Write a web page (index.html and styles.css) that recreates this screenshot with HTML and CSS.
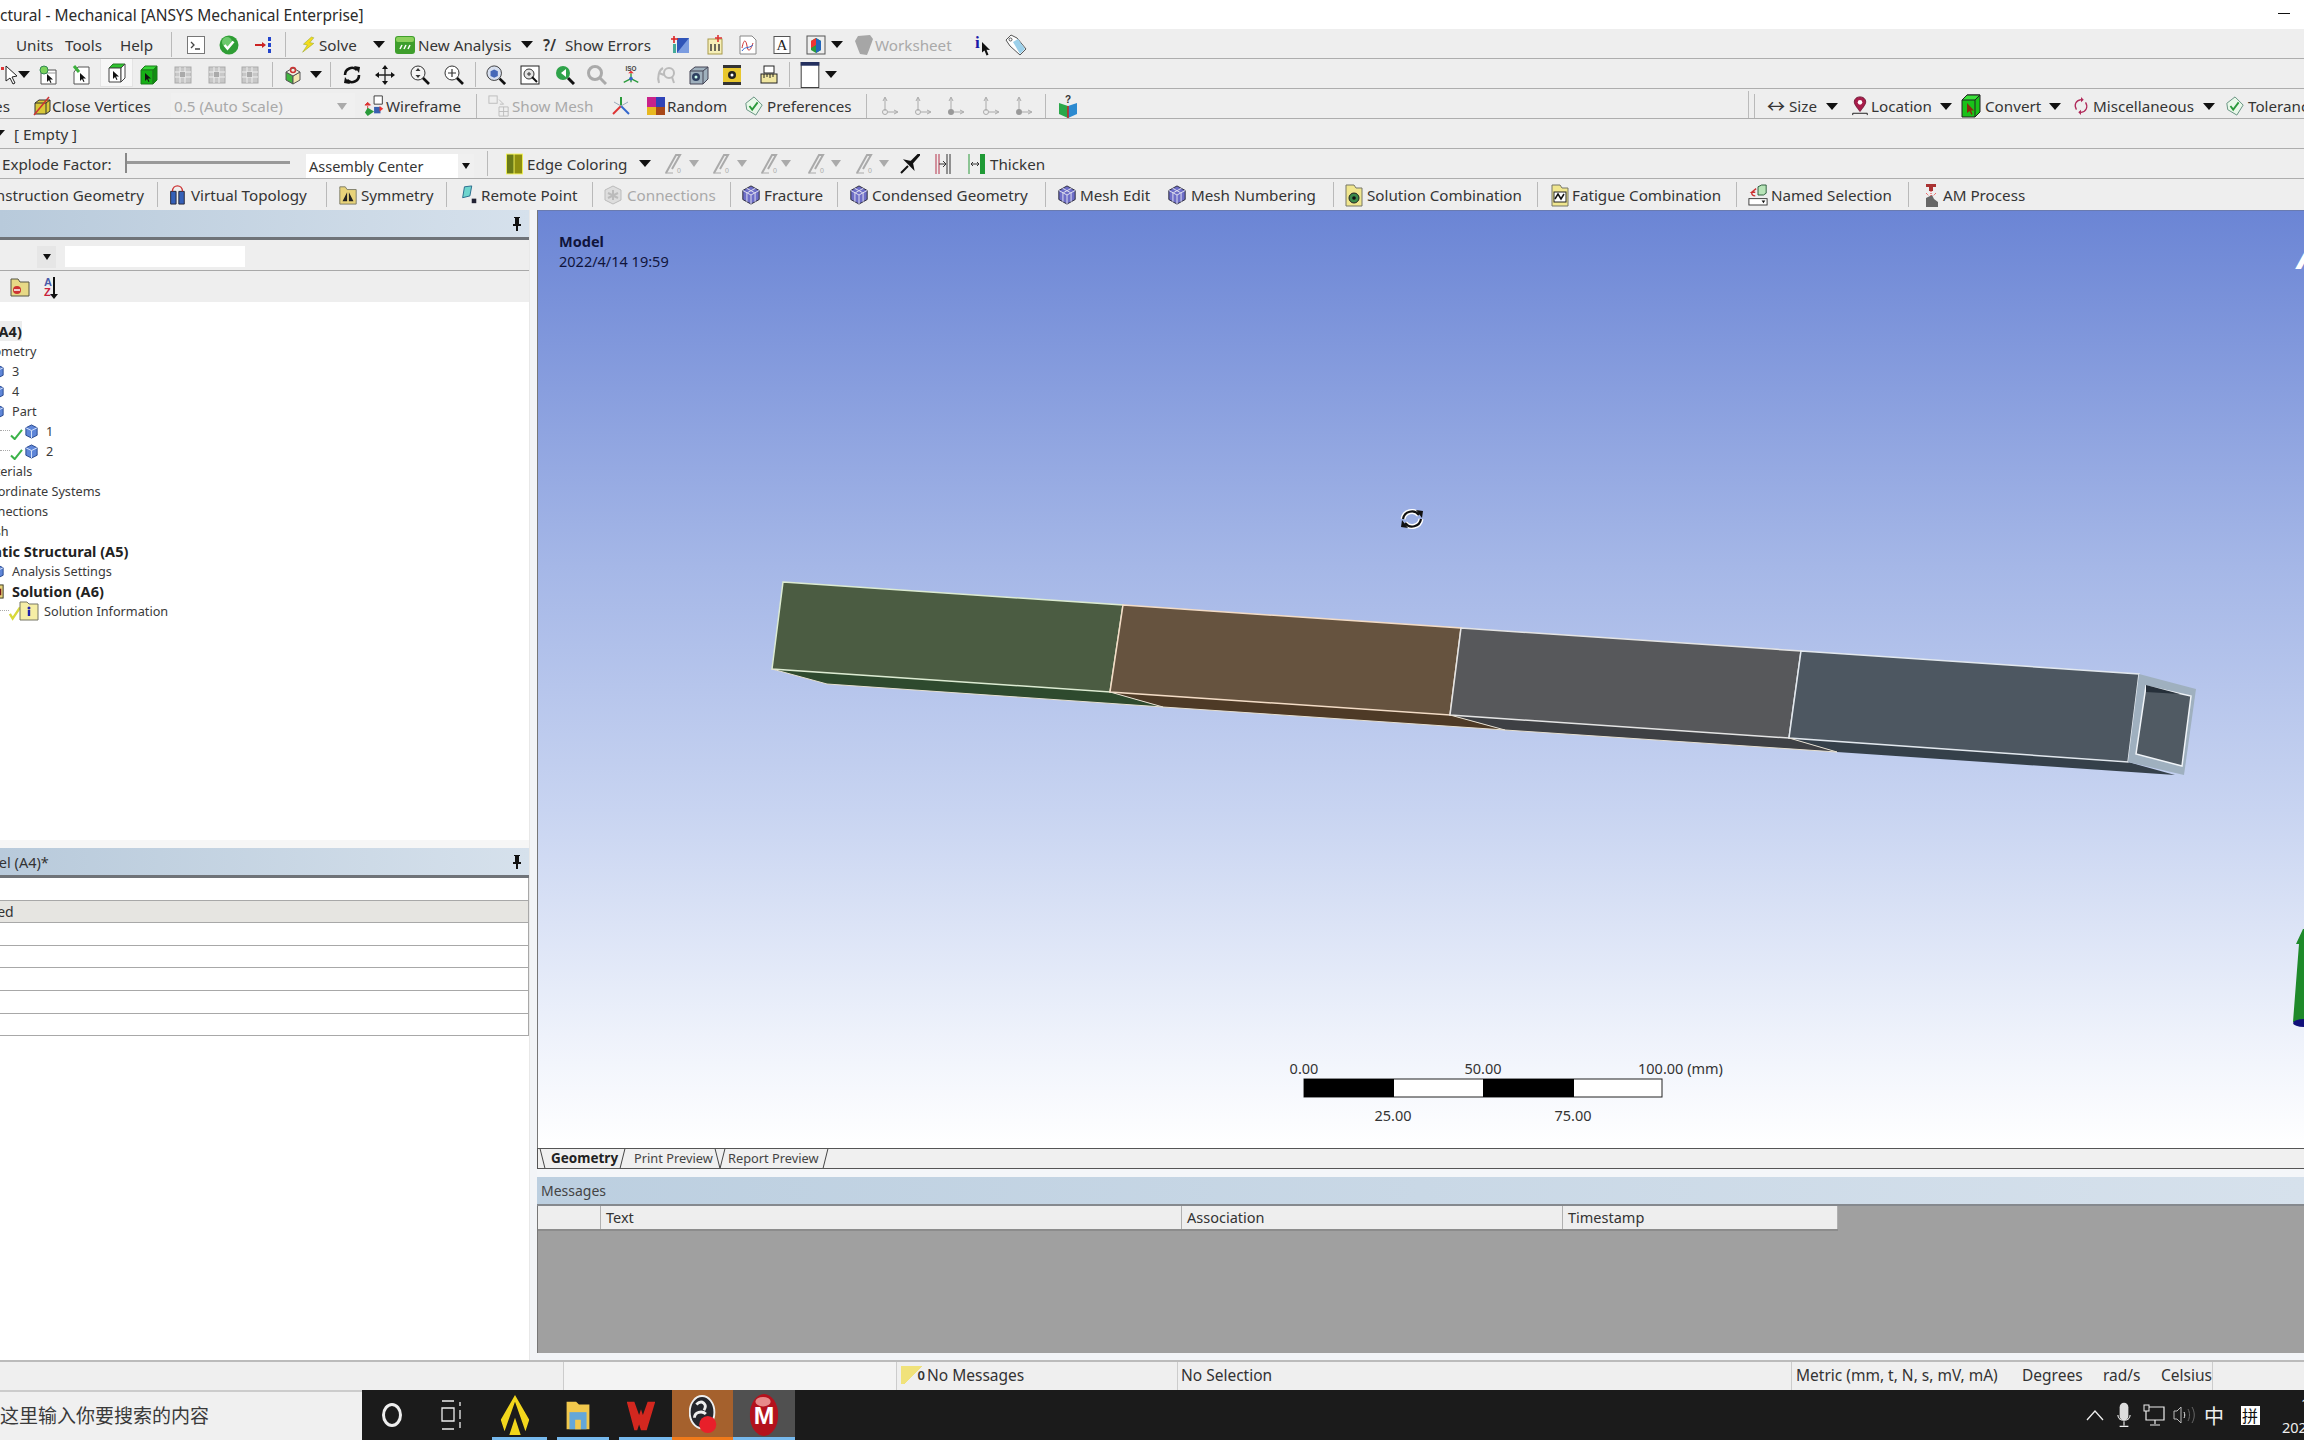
FILE: index.html
```html
<!DOCTYPE html>
<html lang="en">
<head>
<meta charset="utf-8">
<title>Static Structural - Mechanical [ANSYS Mechanical Enterprise]</title>
<link rel="stylesheet" href="styles.css">
</head>
<body>
<svg class="defs" width="0" height="0">
<symbol id="term" viewBox="0 0 20 20"><rect x="1.5" y="1.5" width="17" height="17" fill="#fff" stroke="#777"/><path d="M5 7l3 3-3 3M9 14h5" fill="none" stroke="#444" stroke-width="1.3"/></symbol>
<symbol id="okc" viewBox="0 0 20 20"><circle cx="10" cy="10" r="9.5" fill="#2f9e35"/><circle cx="8" cy="7" r="5" fill="#6cc96c"/><path d="M5.5 10l3 3.5 6-7" fill="none" stroke="#fff" stroke-width="2.6"/></symbol>
<symbol id="flow" viewBox="0 0 20 20"><path d="M1 10h9" stroke="#c22" stroke-width="2"/><path d="M8 7l4 3-4 3z" fill="#c22"/><rect x="14" y="2" width="3" height="4" fill="#24c"/><rect x="14" y="8" width="3" height="4" fill="#24c"/><rect x="14" y="14" width="3" height="4" fill="#24c"/></symbol>
<symbol id="bolt" viewBox="0 0 20 20"><path d="M13 0L3 9l5 1-6 9 14-11-5-1 5-6z" fill="#f3dc1c" stroke="#9aa92a" stroke-width=".7"/></symbol>
<symbol id="na" viewBox="0 0 20 20"><rect x="0" y="1" width="20" height="18" rx="3" fill="#3e9e2c"/><rect x="1" y="2" width="18" height="5" rx="2" fill="#8bd05c"/><path d="M5 14l2-4M9 14l2-4M13 14l2-4" stroke="#fff" stroke-width="1.5"/></symbol>
<symbol id="sheet" viewBox="0 0 20 20"><rect x="6" y="3" width="12" height="15" fill="#2f54b8"/><path d="M6 18L18 3v15z" fill="#7b9ce0"/><path d="M3 1v7M0 4h7" stroke="#d22" stroke-width="1.6"/><rect x="2" y="9" width="3" height="9" fill="#4a9"/></symbol>
<symbol id="abc" viewBox="0 0 20 20"><rect x="3" y="4" width="14" height="15" fill="#f6efb8" stroke="#a89a4a"/><path d="M6 16v-7M10 16v-7M14 16v-7" stroke="#333" stroke-width="1.4"/><path d="M13 0v7M10 3h7" stroke="#d33" stroke-width="1.6"/></symbol>
<symbol id="dgraph" viewBox="0 0 20 20"><path d="M2 1h12l4 4v14H2z" fill="#fff" stroke="#888"/><path d="M4 13c2-10 4-8 5-2s3 6 6-3" fill="none" stroke="#c33"/><path d="M4 16c3-5 6-2 11-6" fill="none" stroke="#36c"/></symbol>
<symbol id="docA" viewBox="0 0 20 20"><rect x="2" y="1.5" width="16" height="17" fill="#fff" stroke="#555"/><text x="10" y="15" text-anchor="middle" class="svg-serif">A</text></symbol>
<symbol id="cubeR" viewBox="0 0 20 20"><rect x="1" y="1" width="18" height="18" fill="#eee" stroke="#555"/><path d="M5 6l5-3 5 3v9l-5 3-5-3z" fill="#2a9a3a"/><path d="M10 3l5 3v9l-5 3z" fill="#26b"/><path d="M5 6l5-3v7l-5 3z" fill="#e33"/></symbol>
<symbol id="hand" viewBox="0 0 20 20"><path d="M2 6l3-5 12-1 3 4-4 11-2 5-7-1-2-5z" fill="#a6a6a6"/></symbol>
<symbol id="info" viewBox="0 0 24 20"><text x="2" y="13" class="svg-info">i</text><path d="M9 7l8 8-3.500-.3 2 5-2 .7-2-5-2.500 2z" fill="#111"/></symbol>
<symbol id="tag" viewBox="0 0 22 22"><path d="M1 6l5-5 6 3 9 11-6 6-10-9z" fill="#fff" stroke="#555"/><path d="M8 8l5-3 7 10-5 5z" fill="#9cd0ea"/><circle cx="5.500" cy="5.500" r="1.500" fill="#fff" stroke="#555"/></symbol>
<symbol id="cursor" viewBox="0 0 20 20"><path d="M6 1v15l4-3 3 6 2-1-3-6 5-1z" fill="#fff" stroke="#222"/><path d="M1 2h3v3H1z" fill="#d33"/></symbol>
<symbol id="selV" viewBox="0 0 20 20"><path d="M3 8l4-3h11v14H3z" fill="#fff" stroke="#555"/><path d="M7 5v3M3 8h15" stroke="#999"/><circle cx="6" cy="5" r="4" fill="#7cd25c" stroke="#385"/><path d="M9 9v8l2-2 1.500 3 1-.5-1.500-3h3z" fill="#111"/></symbol>
<symbol id="selE" viewBox="0 0 20 20"><path d="M3 7l4-5h11v17H3z" fill="#fff" stroke="#555"/><path d="M3 1l5 6" stroke="#3cb03c" stroke-width="3"/><path d="M9 8v8l2-2 1.500 3 1-.5-1.500-3h3z" fill="#111"/></symbol>
<symbol id="selF" viewBox="0 0 20 20"><path d="M2 5l4-4h12l-4 4z" fill="#2fc42f" stroke="#2a7a2a"/><path d="M2 5h12v14H2z" fill="#fff" stroke="#444"/><path d="M14 5l4-4v14l-4 4z" fill="#fff" stroke="#444"/><path d="M6 8v8l2-2 1.500 3 1-.5-1.500-3h3z" fill="#111"/></symbol>
<symbol id="selB" viewBox="0 0 20 20"><path d="M2 5l4-4h12l-4 4z" fill="#35d635" stroke="#1c7a1c"/><path d="M2 5h12v14H2z" fill="#16b016" stroke="#1c7a1c"/><path d="M14 5l4-4v14l-4 4z" fill="#0f8f0f" stroke="#1c7a1c"/><path d="M6 8v8l2-2 1.500 3 1-.5-1.500-3h3z" fill="#111"/></symbol>
<symbol id="gmesh" viewBox="0 0 20 20"><rect x="2" y="2" width="16" height="16" fill="#c8c8c8" stroke="#aaa"/><path d="M2 7h16M2 12h16M7 2v16M12 2v16" stroke="#eee"/><rect x="7" y="7" width="5" height="5" fill="#aaa"/></symbol>
<symbol id="cubeP" viewBox="0 0 20 20"><path d="M3 7l7 4v8l-7-4z" fill="#3fb53f" stroke="#555"/><path d="M17 7l-7 4v8l7-4z" fill="#f4e7b2" stroke="#555"/><path d="M3 7l7-4 7 4-7 4z" fill="#f1efe0" stroke="#555"/><circle cx="10" cy="5" r="2.500" fill="none" stroke="#c33" stroke-width="1.500"/></symbol>
<symbol id="rot" viewBox="0 0 20 20"><path d="M3 10a7 7 0 0 1 12-5" fill="none" stroke="#111" stroke-width="2.600"/><path d="M12 1l6 1-1 6z" fill="#111"/><path d="M17 10a7 7 0 0 1-12 5" fill="none" stroke="#111" stroke-width="2.600"/><path d="M8 19l-6-1 1-6z" fill="#111"/></symbol>
<symbol id="pan" viewBox="0 0 20 20"><path d="M10 3v14M3 10h14" stroke="#222" stroke-width="1.300"/><path d="M10 0l3 4H7zM10 20l3-4H7zM0 10l4-3v6zM20 10l-4-3v6z" fill="#111"/></symbol>
<symbol id="zb" viewBox="0 0 20 20"><circle cx="8" cy="8" r="7" fill="#f4f4f4" stroke="#333"/><path d="M8 3l2.500 3h-5zM8 13l2.500-3h-5z" fill="#333"/><path d="M13 13l6 6" stroke="#111" stroke-width="2.600"/></symbol>
<symbol id="zp" viewBox="0 0 20 20"><circle cx="8" cy="8" r="7" fill="#fff" stroke="#333"/><path d="M8 4v8M4 8h8" stroke="#333" stroke-width="1.200"/><path d="M13 13l6 6" stroke="#111" stroke-width="2.600"/></symbol>
<symbol id="zcube" viewBox="0 0 22 22"><circle cx="9" cy="9" r="8" fill="#d7dfef" stroke="#333"/><path d="M5 7l4-2 4 2v5l-4 2-4-2z" fill="#4668b8"/><path d="M15 15l6 6" stroke="#111" stroke-width="3"/></symbol>
<symbol id="zbox" viewBox="0 0 20 20"><rect x="1" y="1" width="18" height="18" fill="#fff" stroke="#222"/><circle cx="9" cy="9" r="5" fill="#e4e4e4" stroke="#333"/><path d="M7 9h4M9 7v4" stroke="#333"/><path d="M12 12l5 5" stroke="#111" stroke-width="2"/></symbol>
<symbol id="zgreen" viewBox="0 0 20 20"><circle cx="8" cy="8" r="7" fill="#2fa34a"/><path d="M11 4L6 8l5 4z" fill="#fff"/><path d="M13 13l6 6" stroke="#111" stroke-width="3"/></symbol>
<symbol id="zgrey" viewBox="0 0 20 20"><circle cx="8" cy="8" r="6.500" fill="none" stroke="#aaa" stroke-width="3"/><path d="M13 13l6 6" stroke="#aaa" stroke-width="3"/></symbol>
<symbol id="iso" viewBox="0 0 22 22"><text x="11" y="7" text-anchor="middle" class="svg-iso">ISO</text><path d="M11 9v10M11 15l-8 4M11 15l8 4" stroke="#2a9a3a" stroke-width="1.500"/><path d="M8 9h6l-3-3z" fill="#e33"/><circle cx="11" cy="15" r="2" fill="#36c"/></symbol>
<symbol id="look" viewBox="0 0 20 20"><path d="M3 18c-2-6 0-13 4-15M3 8l5 2" fill="none" stroke="#bbb" stroke-width="2"/><circle cx="13" cy="8" r="5" fill="none" stroke="#bbb" stroke-width="2"/><path d="M16 12l2 6" stroke="#bbb" stroke-width="2"/></symbol>
<symbol id="eye" viewBox="0 0 20 20"><path d="M1 6l5-4h13v12l-5 5H1z" fill="#9fb0bd" stroke="#445"/><path d="M1 6h13v13M14 6l5-4" fill="none" stroke="#445"/><circle cx="7" cy="12" r="4" fill="#2d3f60"/><circle cx="7" cy="12" r="1.500" fill="#cfe"/></symbol>
<symbol id="film" viewBox="0 0 20 20"><rect x="1" y="0" width="18" height="20" fill="#e8c72e"/><rect x="1" y="0" width="18" height="3" fill="#333"/><rect x="1" y="17" width="18" height="3" fill="#333"/><circle cx="10" cy="10" r="4" fill="#222"/><circle cx="10" cy="10" r="1.500" fill="#fff"/></symbol>
<symbol id="ruler" viewBox="0 0 20 20"><rect x="5" y="1" width="10" height="7" fill="#fff" stroke="#222"/><rect x="2" y="9" width="16" height="9" fill="#f0e6a0" stroke="#222"/><path d="M5 9v4M8 9v3M11 9v4M14 9v3" stroke="#222"/></symbol>
<symbol id="win" viewBox="0 0 20 28"><rect x=".5" y=".5" width="19" height="27" fill="#fff" stroke="#333"/><rect x="0" y="0" width="20" height="4" fill="#24305f"/></symbol>
<symbol id="closeV" viewBox="0 0 20 20"><path d="M3 7l4-3h11v11l-4 3H3z" fill="#d8c838" stroke="#333"/><path d="M3 7h11v11M14 7l4-3" fill="none" stroke="#333"/><path d="M2 19L17 1" stroke="#c33" stroke-width="1.500"/></symbol>
<symbol id="wire" viewBox="0 0 22 24"><path d="M10 1h9v9h-9z" fill="#fff" stroke="#333"/><path d="M3 8l3 3H0zM3 12v4" stroke="#d33" fill="#d33"/><path d="M3 14l7 4-7 5-3-4z" fill="#2a9a3a"/><rect x="10" y="13" width="7" height="7" fill="#3860b0"/><path d="M16 12l4 3-4 3z" fill="#e33"/></symbol>
<symbol id="showM" viewBox="0 0 24 24"><rect x="1" y="1" width="9" height="8" fill="none" stroke="#bbb"/><path d="M12 5l5 5h-4" fill="none" stroke="#bbb"/><path d="M12 13h10v10H12zM12 18h10M17 13v10" fill="none" stroke="#bbb"/></symbol>
<symbol id="triad" viewBox="0 0 20 20"><path d="M10 1v9" stroke="#2a9a3a" stroke-width="2"/><path d="M10 10L2 18" stroke="#d33" stroke-width="2"/><path d="M10 10l8 8" stroke="#36c" stroke-width="2"/><path d="M3 6l7 4 7-4" stroke="#9ab" fill="none"/></symbol>
<symbol id="rand" viewBox="0 0 20 20"><rect x="1" y="1" width="9" height="10" fill="#c8238a"/><rect x="10" y="1" width="9" height="10" fill="#2f43b8"/><rect x="1" y="11" width="9" height="8" fill="#e8b820"/><rect x="10" y="11" width="9" height="8" fill="#a84818"/></symbol>
<symbol id="pref" viewBox="0 0 20 22"><path d="M10 1l9 9-7 11-10-6-1-7z" fill="#e8f8e8" stroke="#5a8a78"/><path d="M5 11l3 4 6-8" fill="none" stroke="#2a9a3a" stroke-width="2"/></symbol>
<symbol id="axO" viewBox="0 0 20 20"><path d="M6 15V2M4 5l2-4 2 4M9 16h9M15 14l4 2-4 2" fill="none" stroke="#aaa"/><circle cx="6" cy="16" r="2.500" fill="none" stroke="#aaa"/></symbol>
<symbol id="axF" viewBox="0 0 20 20"><path d="M6 15V2M4 5l2-4 2 4M9 16h9M15 14l4 2-4 2" fill="none" stroke="#aaa"/><circle cx="6" cy="16" r="3" fill="#999"/></symbol>
<symbol id="book" viewBox="0 0 20 24"><text x="10" y="9" text-anchor="middle" class="svg-q">?</text><path d="M10 12L1 9v11l9 4z" fill="#2aa84a"/><path d="M10 12l9-3v11l-9 4z" fill="#2c8ad0"/><path d="M10 12v12" stroke="#c22" stroke-width="1.500"/></symbol>
<symbol id="loc" viewBox="0 0 20 22"><path d="M10 1c-5 0-7 4-6 7s6 9 6 9 5-6 6-9-1-7-6-7z" fill="#a81c4a" stroke="#6b1030"/><circle cx="10" cy="7" r="2.500" fill="#fff"/><path d="M2 21v-2h16v2" fill="none" stroke="#111"/></symbol>
<symbol id="conv" viewBox="0 0 20 24"><path d="M1 6l5-5h13v17l-5 5H1z" fill="#19c219" stroke="#222"/><path d="M1 6l5-5h13l-5 5z" fill="#3ae03a" stroke="#222"/><path d="M14 6v17M14 6l5-5" fill="none" stroke="#222"/><path d="M6 9v10l2.500-2 2 4 1-1-1.500-3.500h3z" fill="#8a2a10"/></symbol>
<symbol id="misc" viewBox="0 0 18 22"><path d="M9 4C3 5 1 10 4 15M9 18c6-1 8-6 5-11" fill="none" stroke="#b02a5a" stroke-width="1.400"/><path d="M9 1l3 3-3 3zM9 15l-3 3 3 3z" fill="#b02a5a"/></symbol>
<symbol id="pen" viewBox="0 0 20 20"><path d="M3 19L13 1h4l-8 14" fill="none" stroke="#aaa" stroke-width="2"/><path d="M2 19h8" stroke="#aaa"/><text x="14" y="19" class="svg-sm">0</text></symbol>
<symbol id="pin" viewBox="0 0 20 20"><path d="M19 0L11 8l-5-1 7 7-1-5 7-8zM8 12l-7 7" fill="#111" stroke="#111" stroke-width="2"/></symbol>
<symbol id="bars" viewBox="0 0 18 20"><path d="M2 0v20M5 0v20" stroke="#b5334a"/><path d="M5 10h7M9 7l3 3-3 3" fill="none" stroke="#333"/><path d="M13 0v20M16 0v20" stroke="#333"/></symbol>
<symbol id="thk" viewBox="0 0 18 20"><path d="M1 0v20" stroke="#2a9a3a"/><path d="M3 10h8M5 8l-2 2 2 2M9 8l2 2-2 2" fill="none" stroke="#333"/><rect x="12" y="0" width="5" height="20" fill="#1f9a35"/></symbol>
<symbol id="edge" viewBox="0 0 18 22"><rect width="18" height="22" fill="#f2f25a"/><rect x="1" y="1" width="7" height="20" fill="#6a7a18"/><rect x="9" y="1" width="8" height="20" fill="#8f8f10"/></symbol>
<symbol id="vt" viewBox="0 0 22 24"><path d="M4 8h6v14H4zM13 8h6v14h-6z" fill="#3460b8" stroke="#223"/><path d="M6 8c0-8 11-8 11 0" fill="none" stroke="#c33" stroke-width="1.500"/></symbol>
<symbol id="sym" viewBox="0 0 20 22"><path d="M1 5V2h6l2 3h10v16H1z" fill="#e8d37a" stroke="#776"/><path d="M9 8v10L4 18zM11 8v10l5 0z" fill="#222"/></symbol>
<symbol id="rp" viewBox="0 0 20 22"><path d="M3 14L5 2l8-1-2 11z" fill="#6ed5ce" stroke="#268"/><rect x="13" y="15" width="5" height="5" fill="#223"/></symbol>
<symbol id="conn" viewBox="0 0 20 20"><path d="M10 1l8 4v10l-8 4-8-4V5z" fill="#ddd" stroke="#bbb"/><path d="M10 5v10M5 8l10 5M15 8L5 13" stroke="#bbb" stroke-width="2"/></symbol>
<symbol id="hex" viewBox="0 0 22 22"><path d="M11 1l9 5v10l-9 5-9-5V6z" fill="#6e6ec8" stroke="#223"/><path d="M2 6l9 5 9-5M11 11v10M6 3.500l9 5M16 3.500l-9 5M6.500 8.500v10M15.500 8.500v10" fill="none" stroke="#dde" stroke-width="1.100"/></symbol>
<symbol id="fold" viewBox="0 0 20 24"><path d="M2 6V2h8l2 3h6v18H2z" fill="#f0e68e" stroke="#776"/><circle cx="10" cy="15" r="5" fill="#3a8a4a" stroke="#222"/><circle cx="10" cy="15" r="1.800" fill="#111"/></symbol>
<symbol id="foldF" viewBox="0 0 20 24"><path d="M2 6V2h8l2 3h6v18H2z" fill="#f0e68e" stroke="#776"/><rect x="4" y="9" width="12" height="10" fill="#fff" stroke="#222"/><path d="M5 16l3-5 3 5 3-5" fill="none" stroke="#111" stroke-width="1.500"/></symbol>
<symbol id="ns" viewBox="0 0 22 24"><path d="M9 5l-5 4h4M4 9c0 3 2 4 4 4" fill="none" stroke="#c33" stroke-width="1.500"/><path d="M11 3l4-2h5v9l-3 2h-6z" fill="#b7e4b7" stroke="#253"/><rect x="1" y="16" width="20" height="7" fill="#fff" stroke="#333"/><path d="M15 18h4l-2 3z" fill="#111"/></symbol>
<symbol id="am" viewBox="0 0 20 24"><path d="M5 1h10v3h-3v4H8V4H5z" fill="#a33"/><path d="M5 24v-9l6-3 2 4 4 3v5z" fill="#666"/><path d="M10 8v5M5 10l3 3M15 10l-3 3" stroke="#e33" stroke-dasharray="1 1"/></symbol>
<symbol id="cube" viewBox="0 0 16 16"><path d="M8 1l6 3v8l-6 3-6-3V4z" fill="#5f86d8" stroke="#24458c"/><path d="M2 4l6 3 6-3M8 7v8" fill="none" stroke="#dbe7fb"/></symbol>
<symbol id="tick" viewBox="0 0 14 12"><path d="M1 7l4 4 8-10" fill="none" stroke="#3cb34a" stroke-width="2.200"/></symbol>
<symbol id="tickY" viewBox="0 0 14 16"><path d="M2 9l3 5 8-12" fill="none" stroke="#d8d83a" stroke-width="2.600"/></symbol>
<symbol id="infoF" viewBox="0 0 20 20"><path d="M1 4V1h7l2 2h9v16H1z" fill="#f6eea5" stroke="#776"/><circle cx="10" cy="7" r="1.500" fill="#22a"/><path d="M10 9v6" stroke="#22a" stroke-width="2.400"/></symbol>
<symbol id="folderN" viewBox="0 0 20 20"><path d="M1 19V2h7l2 3h9v14z" fill="#e7d986" stroke="#554"/><circle cx="7" cy="13" r="4" fill="#c33"/><path d="M4 13h6" stroke="#fff" stroke-width="1.500"/></symbol>
<symbol id="solF" viewBox="0 0 14 16"><rect x="1" y="1" width="12" height="14" fill="#e8d37a" stroke="#332"/><rect x="4" y="5" width="7" height="7" fill="#7a1a1a"/></symbol>
<symbol id="pushpin" viewBox="0 0 12 14"><path d="M3 0h6v1H8v6h2v2H7v5H5V9H2V7h2V1H3z" fill="#111"/></symbol>
<symbol id="aIcon" viewBox="0 0 30 46"><path d="M15 2L0 28 4 40 15 9 26 40l4-12zM9 44l6-18 6 18z" fill="#f2d61c"/></symbol>
<symbol id="folderT" viewBox="0 0 28 34"><path d="M2 3h10l3 3h11v26H2z" fill="#f1c84c"/><rect x="5" y="14" width="18" height="18" fill="#64a7d8"/><rect x="11" y="22" width="6" height="10" fill="#f1c84c"/></symbol>
<symbol id="wps" viewBox="0 0 30 32"><path d="M0 2h8l5 14 2-6 2 6 5-14h8l-9 30h-6l-2-6-2 6H8z" fill="#d3271f"/></symbol>
<symbol id="obs" viewBox="0 0 30 42"><ellipse cx="14" cy="18" rx="13" ry="17" fill="#25262c" stroke="#eee" stroke-width="2"/><path d="M8 10c6-6 12 0 8 6M6 24c0-6 8-8 12-4" fill="none" stroke="#eee" stroke-width="3"/><circle cx="20" cy="31" r="9" fill="#e8202a"/></symbol>
<symbol id="mega" viewBox="0 0 30 46"><ellipse cx="15" cy="23" rx="15" ry="22" fill="#b3121d"/><ellipse cx="14" cy="9" rx="8" ry="5" fill="#e78a8a"/><text x="15" y="33" text-anchor="middle" class="svg-mega">M</text></symbol>
<symbol id="taskv" viewBox="0 0 22 30"><path d="M1 1h12M1 8h12v13H1zM1 29h12M19 2v4M19 10v9M19 22v6" fill="none" stroke="#eee" stroke-width="1.300"/></symbol>
<symbol id="mic" viewBox="0 0 16 28"><rect x="3" y="0" width="10" height="20" rx="5" fill="#ddd"/><path d="M1 14c0 8 14 8 14 0M8 21v5M3 27h10" fill="none" stroke="#eee" stroke-width="1.300"/></symbol>
<symbol id="net" viewBox="0 0 22 22"><path d="M5 3h16v13H3V7M12 16v4M7 21h10" fill="none" stroke="#eee" stroke-width="1.200"/><rect x="1" y="1" width="5" height="6" fill="#222" stroke="#eee"/></symbol>
<symbol id="vol" viewBox="0 0 22 22"><path d="M1 7h3l4-4v16l-4-4H1z" fill="none" stroke="#bbb"/><path d="M11 8c1 2 1 4 0 6" fill="none" stroke="#eee"/><path d="M15 5c2 4 2 8 0 12M19 3c3 5 3 11 0 16" fill="none" stroke="#666"/></symbol>
<symbol id="up" viewBox="0 0 18 12"><path d="M1 11l8-9 8 9" fill="none" stroke="#eee" stroke-width="1.300"/></symbol>
</svg>

<div class="app">
  <header class="titlebar">
    <span class="title">ctural - Mechanical [ANSYS Mechanical Enterprise]</span>
    <span class="min"></span>
  </header>

  <div class="tb tb1">
    <span class="lb">Units</span><span class="lb">Tools</span><span class="lb">Help</span><i class="sep"></i>
    <svg class="ic"><use href="#term"/></svg><svg class="ic"><use href="#okc"/></svg><svg class="ic"><use href="#flow"/></svg><i class="sep"></i>
    <svg class="ic n"><use href="#bolt"/></svg><span class="lb">Solve</span><i class="ar"></i>
    <svg class="ic"><use href="#na"/></svg><span class="lb">New Analysis</span><i class="ar"></i>
    <span class="lb q">?/</span><span class="lb">Show Errors</span>
    <svg class="ic"><use href="#sheet"/></svg><svg class="ic"><use href="#abc"/></svg><svg class="ic"><use href="#dgraph"/></svg><svg class="ic"><use href="#docA"/></svg><svg class="ic"><use href="#cubeR"/></svg><i class="ar"></i>
    <svg class="ic"><use href="#hand"/></svg><span class="lb off">Worksheet</span>
    <svg class="ic w"><use href="#info"/></svg><svg class="ic w"><use href="#tag"/></svg>
  </div>

  <div class="tb tb2">
    <svg class="ic"><use href="#cursor"/></svg><i class="ar"></i>
    <svg class="ic"><use href="#selV"/></svg><svg class="ic"><use href="#selE"/></svg><span class="on"><svg class="ic"><use href="#selF"/></svg></span><svg class="ic"><use href="#selB"/></svg>
    <svg class="ic"><use href="#gmesh"/></svg><svg class="ic"><use href="#gmesh"/></svg><svg class="ic"><use href="#gmesh"/></svg><i class="sep"></i>
    <svg class="ic"><use href="#cubeP"/></svg><i class="ar"></i><i class="sep"></i>
    <svg class="ic"><use href="#rot"/></svg><svg class="ic"><use href="#pan"/></svg><svg class="ic"><use href="#zb"/></svg><svg class="ic"><use href="#zp"/></svg><i class="sep"></i>
    <svg class="ic"><use href="#zcube"/></svg><svg class="ic"><use href="#zbox"/></svg><svg class="ic"><use href="#zgreen"/></svg><svg class="ic"><use href="#zgrey"/></svg><svg class="ic"><use href="#iso"/></svg><svg class="ic"><use href="#look"/></svg><svg class="ic"><use href="#eye"/></svg><svg class="ic"><use href="#film"/></svg><svg class="ic"><use href="#ruler"/></svg><i class="sep"></i>
    <svg class="ic tall"><use href="#win"/></svg><i class="ar"></i>
  </div>

  <div class="tb tb3">
    <span class="lb cut-es">Edges</span><svg class="ic"><use href="#closeV"/></svg><span class="lb">Close Vertices</span>
    <div class="combo"><span class="lb off">0.5 (Auto Scale)</span><i class="ar g"></i></div>
    <svg class="ic w"><use href="#wire"/></svg><span class="lb">Wireframe</span><i class="sep"></i>
    <svg class="ic w"><use href="#showM"/></svg><span class="lb off">Show Mesh</span><svg class="ic"><use href="#triad"/></svg>
    <svg class="ic"><use href="#rand"/></svg><span class="lb">Random</span><svg class="ic"><use href="#pref"/></svg><span class="lb">Preferences</span><i class="sep"></i>
    <svg class="ic"><use href="#axO"/></svg><svg class="ic"><use href="#axO"/></svg><svg class="ic"><use href="#axF"/></svg><svg class="ic"><use href="#axO"/></svg><svg class="ic"><use href="#axF"/></svg><i class="sep"></i>
    <svg class="ic tall2"><use href="#book"/></svg>
    <i class="wall"></i><i class="sep"></i>
    <span class="lb dbl">↔</span><span class="lb">Size</span><i class="ar"></i>
    <svg class="ic"><use href="#loc"/></svg><span class="lb">Location</span><i class="ar"></i>
    <svg class="ic tall2"><use href="#conv"/></svg><span class="lb">Convert</span><i class="ar"></i>
    <svg class="ic"><use href="#misc"/></svg><span class="lb">Miscellaneous</span><i class="ar"></i>
    <svg class="ic"><use href="#pref"/></svg><span class="lb">Tolerances</span>
  </div>

  <div class="tb tb4">
    <i class="ar cut-ar"></i><span class="lb">[ Empty ]</span>
  </div>

  <div class="tb tb5">
    <span class="lb">Explode Factor:</span>
    <div class="slider"><i class="thumb"></i></div>
    <div class="combo2"><span class="lb">Assembly Center</span><span class="combo2-btn"><i class="ar"></i></span></div>
    <i class="sep"></i>
    <svg class="ic e"><use href="#edge"/></svg><span class="lb">Edge Coloring</span><i class="ar"></i>
    <svg class="ic"><use href="#pen"/></svg><i class="ar g"></i><svg class="ic"><use href="#pen"/></svg><i class="ar g"></i><svg class="ic"><use href="#pen"/></svg><i class="ar g"></i><svg class="ic"><use href="#pen"/></svg><i class="ar g"></i><svg class="ic"><use href="#pen"/></svg><i class="ar g"></i>
    <svg class="ic"><use href="#pin"/></svg><svg class="ic"><use href="#bars"/></svg><svg class="ic"><use href="#thk"/></svg><span class="lb">Thicken</span>
  </div>

  <div class="tb tb6">
    <span class="lb cut-con">Construction Geometry</span><i class="sep"></i>
    <svg class="ic tall2"><use href="#vt"/></svg><span class="lb">Virtual Topology</span><i class="sep"></i>
    <svg class="ic"><use href="#sym"/></svg><span class="lb">Symmetry</span><i class="sep"></i>
    <svg class="ic"><use href="#rp"/></svg><span class="lb">Remote Point</span><i class="sep"></i>
    <svg class="ic"><use href="#conn"/></svg><span class="lb off">Connections</span><i class="sep"></i>
    <svg class="ic"><use href="#hex"/></svg><span class="lb">Fracture</span><i class="sep"></i>
    <svg class="ic"><use href="#hex"/></svg><span class="lb">Condensed Geometry</span><i class="sep"></i>
    <svg class="ic"><use href="#hex"/></svg><span class="lb">Mesh Edit</span>
    <svg class="ic"><use href="#hex"/></svg><span class="lb">Mesh Numbering</span><i class="sep"></i>
    <svg class="ic tall2"><use href="#fold"/></svg><span class="lb">Solution Combination</span><i class="sep"></i>
    <svg class="ic tall2"><use href="#foldF"/></svg><span class="lb">Fatigue Combination</span><i class="sep"></i>
    <svg class="ic tall2"><use href="#ns"/></svg><span class="lb">Named Selection</span><i class="sep"></i>
    <svg class="ic tall2"><use href="#am"/></svg><span class="lb">AM Process</span>
  </div>

  <main class="main">
    <aside class="left">
      <div class="phead"><span></span><svg class="pinned"><use href="#pushpin"/></svg></div>
      <div class="filter"><span class="filter-btn"><i class="ar"></i></span><span class="filter-input"></span></div>
      <div class="treebar"><svg class="ic"><use href="#folderN"/></svg><span class="az">A<br><span class="az-z">Z</span></span><i class="azarrow"></i></div>
      <div class="tree">
        <div class="row b l1"><span class="hl">Model (A4)</span></div>
        <div class="row l2">Geometry</div>
        <div class="row"><svg class="tcube cut"><use href="#cube"/></svg><span>3</span></div>
        <div class="row"><svg class="tcube cut"><use href="#cube"/></svg><span>4</span></div>
        <div class="row"><svg class="tcube cut"><use href="#cube"/></svg><span>Part</span></div>
        <div class="row lp"><i class="dots"></i><svg class="ttick"><use href="#tick"/></svg><svg class="tcube"><use href="#cube"/></svg><span>1</span></div>
        <div class="row lp"><i class="dots"></i><svg class="ttick"><use href="#tick"/></svg><svg class="tcube"><use href="#cube"/></svg><span>2</span></div>
        <div class="row l2">Materials</div>
        <div class="row l2b">Coordinate Systems</div>
        <div class="row l2c">Connections</div>
        <div class="row l2d">Mesh</div>
        <div class="row b l2s">Static Structural (A5)</div>
        <div class="row"><svg class="tcube cut"><use href="#cube"/></svg><span>Analysis Settings</span></div>
        <div class="row b"><svg class="tcube cut"><use href="#solF"/></svg><span>Solution (A6)</span></div>
        <div class="row lp2"><i class="dots"></i><svg class="ttickY"><use href="#tickY"/></svg><svg class="tinfo"><use href="#infoF"/></svg><span>Solution Information</span></div>
      </div>
      <div class="phead det"><span class="cut-d">Model (A4)*</span><svg class="pinned"><use href="#pushpin"/></svg></div>
      <div class="dtable">
        <div class="dr"></div>
        <div class="dr gr"><span class="cut-ed">Defined</span></div>
        <div class="dr"></div>
        <div class="dr"></div>
        <div class="dr"></div>
        <div class="dr"></div>
        <div class="dr"></div>
      </div>
    </aside>

    <section class="right">
      <div class="view">
        <svg class="scene" viewBox="537 211 1767 936">
          <g stroke-width="1.500">
            <polygon points="772,670 827,685 1163,708 1110,693" fill="#2e4a2e"/>
            <polygon points="1110,693 1163,708 1505,731 1450,716" fill="#4e3a26"/>
            <polygon points="1450,716 1505,731 1837,753 1789,739" fill="#3e4044"/>
            <polygon points="1789,739 1837,753 2175,776 2128,763" fill="#35404a"/>
            <polygon points="783,583 1123,606 1110,693 772,670" fill="#4b5c42" stroke="#dcebd2"/>
            <polygon points="1123,606 1461,629 1450,716 1110,693" fill="#66533f" stroke="#f3dcc6"/>
            <polygon points="1461,629 1801,652 1789,739 1450,716" fill="#57585b" stroke="#e4e4e4"/>
            <polygon points="1801,652 2139,675 2128,763 1789,739" fill="#4d5761" stroke="#e2e8ee"/>
            <path d="M772 670l55 15 336 23M1110 693l53 15M1163 708l342 23M1450 716l55 15M1505 731l332 22M1789 739l48 14" fill="none" stroke="#e6dfd0" stroke-width="1"/>
            <polygon points="2139,675 2196,690 2184,776 2128,763" fill="#9fb0bf"/>
            <polygon points="2146,687 2191,697 2182,767 2136,755" fill="#505a63" stroke="#f0f4f8"/>
            <polygon points="2146,686 2180,695 2146,693" fill="#26303a"/>
          </g>
          <polygon points="2293,1023 2299,945 2296,945 2303,930 2304,930 2304,1023" fill="#1e8a2a"/>
          <ellipse cx="2304" cy="1024" rx="11" ry="4" fill="#10107a"/>
          <g fill="none" stroke="#fff" stroke-width="5"><path d="M1403 520a9 9 0 0 1 16-4M1421 520a9 9 0 0 1-16 4"/></g>
          <g fill="none" stroke="#111" stroke-width="2.200"><path d="M1403 520a9 9 0 0 1 16-4M1421 520a9 9 0 0 1-16 4"/></g>
          <path d="M1416 511l7 1-1 7zM1408 529l-7-1 1-7z" fill="#111"/>
          <rect x="1304" y="1080" width="358" height="18" fill="#fff" stroke="#222"/>
          <rect x="1304" y="1080" width="90" height="18" fill="#000"/>
          <rect x="1483" y="1080" width="91" height="18" fill="#000"/>
          <text x="1304" y="1075" class="sc m">0.00</text>
          <text x="1483" y="1075" class="sc m">50.00</text>
          <text x="1638" y="1075" class="sc">100.00 (mm)</text>
          <text x="1393" y="1122" class="sc m">25.00</text>
          <text x="1573" y="1122" class="sc m">75.00</text>
        </svg>
        <div class="vlabel"><b>Model</b><br>2022/4/14 19:59</div>
        <div class="logo">A</div>
      </div>
      <div class="tabs">
        <span class="tab t-geo">Geometry</span><span class="tab t-print">Print Preview</span><span class="tab t-rep">Report Preview</span>
      </div>
      <div class="gap"></div>
      <div class="mhead">Messages</div>
      <div class="mtable">
        <div class="mhdr"><span class="c0"></span><span class="c1">Text</span><span class="c2">Association</span><span class="c3">Timestamp</span></div>
      </div>
    </section>
  </main>

  <footer class="status">
    <span class="st0"></span>
    <span class="st1"></span>
    <span class="st2"><span class="msgi">0</span>No Messages</span>
    <span class="st3">No Selection</span>
    <span class="st4"><span>Metric (mm, t, N, s, mV, mA)</span><span>Degrees</span><span>rad/s</span><span>Celsius</span></span>
  </footer>

  <nav class="taskbar">
    <div class="search">这里输入你要搜索的内容</div>
    <div class="tk"><i class="cortana"></i></div>
    <div class="tk"><svg class="tv"><use href="#taskv"/></svg></div>
    <div class="tk a1 run"><svg class="ti"><use href="#aIcon"/></svg></div>
    <div class="tk a2 run"><svg class="ti s"><use href="#folderT"/></svg></div>
    <div class="tk a3 run"><svg class="ti s"><use href="#wps"/></svg></div>
    <div class="tk a4 live"><svg class="ti"><use href="#obs"/></svg></div>
    <div class="tk a5 cur"><svg class="ti"><use href="#mega"/></svg></div>
    <div class="tray">
      <svg class="t1"><use href="#up"/></svg>
      <svg class="t2"><use href="#mic"/></svg>
      <svg class="t3"><use href="#net"/></svg>
      <svg class="t3"><use href="#vol"/></svg>
      <span class="ime">中</span>
      <span class="pin">拼</span>
      <span class="clock"><span class="time">19:59</span><br>2022/4/14</span>
    </div>
  </nav>
</div>
</body>
</html>
```
FILE: styles.css
```css
* { box-sizing: border-box; }
html, body { margin: 0; padding: 0; width: 2304px; height: 1440px; overflow: hidden; background: #f0f0f0; }
body { font-family: "Noto Sans", "Noto Sans CJK SC", sans-serif; font-size: 15px; color: #333; }
.defs { position: absolute; }
.svg-serif { font: 15px "Liberation Serif", serif; fill: #222; }
.svg-info { font: bold 17px "Liberation Serif", serif; fill: #1a1aa8; }
.svg-iso { font: bold 7px "Liberation Sans", sans-serif; fill: #444; }
.svg-q { font: bold 10px "Liberation Sans", sans-serif; fill: #333; }
.svg-sm { font: 7px "Liberation Sans", sans-serif; fill: #aaa; }
.svg-mega { font: bold 26px "Liberation Sans", sans-serif; fill: #fff; }

.app { display: flex; flex-direction: column; width: 2304px; height: 1440px; overflow: hidden; }
.titlebar { height: 29px; flex: none; background: #fff; display: flex; align-items: center; justify-content: space-between; padding-right: 14px; }
.title { font-size: 15.500px; color: #2b2b2b; }
.min { width: 12px; height: 1px; background: #111; margin-top: -3px; }

.tb { height: 30px; flex: none; display: grid; align-items: center; background: #eeeeee; border-bottom: 1px solid #adadad; overflow: hidden; white-space: nowrap; justify-items: start; }
.tb1 { padding: 2px 0 0 16px; grid-template-columns: 49px 55px 51px 15px 33px 35px 31px 16px 18px 54px 22px 23px 103px 22px 22px 106px 34px 33px 34px 34px 25px 22px 22px 98px 31px auto; }
.tb2 { padding-top: 2px; grid-template-columns: 18px 20px 33px 35px 33px 34px 34px 33px 32px 11px 27px 20px 12px 33px 35px 34px 31px 11px 34px 35px 32px 34px 35px 33px 33px 37px 30px 11px 25px auto; }
.tb3 { padding-top: 2px; grid-template-columns: 32px 20px 119px 192px 23px 90px 11px 25px 99px 35px 21px 77px 23px 99px 13px 33px 33px 35px 33px 32px 13px 690px 6px 13px 22px 37px 24px 21px 69px 21px 24px 64px 22px 22px 110px 22px 23px auto; }
.tb4 { grid-template-columns: 14px auto; }
.tb5 { padding-left: 2px; grid-template-columns: 123px 181px 181px 19px 21px 112px 24px 26px 22px 26px 22px 22px 25px 25px 23px 25px 21px 33px 34px 23px auto; }
.tb6 { height: 31px; border-bottom: 0; grid-template-columns: 157px 10px 24px 135px 12px 23px 85px 13px 22px 111px 11px 24px 103px 11px 23px 73px 12px 23px 173px 12px 23px 87px 24px 142px 11px 23px 170px 13px 22px 164px 12px 23px 137px 13px 22px auto; }

.lb { display: block; font-size: 15.200px; line-height: 20px; color: #353535; }
.off { color: #a9a9a9; }
.ic { display: block; width: 20px; height: 20px; }
.ic.w { width: 24px; height: 22px; }
.ic.n { width: 16px; height: 20px; }
.ic.tall { width: 20px; height: 26px; }
.ic.tall2 { width: 20px; height: 24px; }
.ic.e { width: 17px; height: 22px; }
.on { display: block; background: #f7f7f7; border: 1px solid #e4e4e4; margin: -5px 0 0 -6px; padding: 4px 6px 0; height: 29px; width: 33px; }
.ar { display: block; width: 0; height: 0; border-left: 6px solid transparent; border-right: 6px solid transparent; border-top: 7px solid #111; }
.ar.g { border-left-width: 5px; border-right-width: 5px; border-top-color: #aaa; }
.cut-ar { margin-left: -7px; }
.sep { display: block; width: 1px; height: 25px; background: #b9b9b9; }
.wall { display: block; width: 1px; height: 30px; background: #bbb; }
.q { font-weight: 600; }
.dbl { font-size: 18px; }
.cut-es { margin-left: -33px; }
.cut-con { margin-left: -23px; }
.combo { display: flex; align-items: center; justify-content: space-between; width: 184px; height: 27px; background: #f0f0f0; padding: 0 8px 0 3px; }
.slider { position: relative; width: 165px; height: 3px; background: #999; margin-top: -2px; }
.thumb { position: absolute; left: 0; top: -8px; width: 2px; height: 20px; background: #888; }
.combo2 { display: flex; width: 168px; height: 24px; background: #fff; align-items: center; margin-top: 4px; }
.combo2 .lb { flex: 1; padding-left: 3px; font-size: 14.500px; }
.combo2-btn { width: 16px; height: 24px; background: #f0f0f0; display: flex; align-items: center; justify-content: center; }
.combo2-btn .ar { border-left-width: 4px; border-right-width: 4px; border-top-width: 6px; }

.main { flex: 1; display: flex; min-height: 0; background: #f2f4f7; }
.left { width: 530px; flex: none; display: flex; flex-direction: column; overflow: hidden; background: #fff; border-right: 1px solid #e8e8e8; }
.phead { height: 30px; flex: none; display: flex; align-items: center; justify-content: space-between; padding: 0 4px 0 0; background: linear-gradient(90deg, #b8cadb, #d6e1ec); border-bottom: 3px solid #6f7378; }
.phead.det { font-size: 14.500px; }
.pinned { width: 12px; height: 14px; margin-right: 2px; }
.cut-d { margin-left: -32px; color: #333; }
.filter { height: 31px; flex: none; display: flex; align-items: center; padding-top: 3px; background: #eeeeee; border-bottom: 1px solid #a8a8a8; }
.filter-btn { width: 19px; height: 22px; margin-left: 37px; background: #e6e6e6; display: flex; align-items: center; justify-content: center; }
.filter-btn .ar { border-left-width: 4px; border-right-width: 4px; border-top-width: 6px; }
.filter-input { width: 180px; height: 21px; margin-left: 9px; background: #fff; }
.treebar { height: 31px; flex: none; display: flex; align-items: center; padding-left: 10px; background: #eeeeee; }
.az { font: bold 11px/10px "Liberation Sans", sans-serif; color: #4a5aa8; margin-left: 14px; }
.az-z { color: #c8203a; }
.azarrow { display: block; position: relative; width: 2px; height: 19px; background: #111; margin-left: 1px; }
.azarrow::after { content: ""; position: absolute; left: -3px; bottom: -3px; border-left: 4px solid transparent; border-right: 4px solid transparent; border-top: 5px solid #111; }
.tree { height: 546px; flex: none; padding-top: 19px; background: #fff; border-bottom: 8px solid #f6f6f6; font-size: 12.700px; color: #3a3a3a; }
.row { height: 20px; display: flex; align-items: center; white-space: nowrap; line-height: 20px; }
.b { font-weight: 700; font-size: 14.500px; color: #222; }
.hl { background: #ededed; }
.l1 { margin-left: -55px; }
.l2 { margin-left: -23px; }
.l2b { margin-left: -18px; }
.l2c { margin-left: -26px; }
.l2d { margin-left: -24px; }
.l2s { margin-left: -21px; }
.tcube { width: 15px; height: 15px; flex: none; }
.tcube.cut { margin-left: -10px; margin-right: 7px; }
.lp .dots { width: 10px; }
.dots { display: block; height: 1px; border-top: 1px dotted #aaa; margin-top: -2px; }
.ttick { width: 13px; height: 11px; margin-top: 6px; flex: none; }
.lp .tcube { margin-left: 1px; margin-right: 7px; }
.lp2 .dots { width: 9px; }
.ttickY { width: 13px; height: 16px; margin-top: 4px; margin-left: -1px; flex: none; }
.tinfo { width: 20px; height: 20px; flex: none; margin-left: -2px; margin-right: 5px; }
.dtable { background: #fff; flex: 1; }
.dr { height: 22.600px; background: #fff; border-bottom: 1px solid #a8a8a8; border-right: 1px solid #a8a8a8; font-size: 14px; line-height: 22px; white-space: nowrap; }
.dr.gr { background: #e6e5e1; color: #333; }
.cut-ed { display: inline-block; margin-left: -38px; }

.right { flex: 1; margin-left: 7px; display: flex; flex-direction: column; min-width: 0; }
.view { position: relative; height: 938px; flex: none; overflow: hidden; border-left: 1px solid #777; border-top: 1px solid #6a7bb0; background: linear-gradient(180deg, #6b85d5 0%, #a5b7e7 38%, #c8d4f1 64%, #eef2fb 88%, #fff 100%); }
.scene { position: absolute; left: -1px; top: -1px; width: 1767px; height: 936px; }
.sc { font-size: 14.500px; fill: #333; font-family: "Noto Sans", sans-serif; }
.sc.m { text-anchor: middle; }
.vlabel { position: absolute; left: 21px; top: 20px; font-size: 14.500px; line-height: 20px; color: #10143c; }
.logo { position: absolute; left: 1758px; top: 22px; font: italic bold 40px "Liberation Sans", sans-serif; color: #fff; }
.tabs { height: 21px; flex: none; display: flex; background: #f0f0f0; border-top: 1px solid #555; border-bottom: 1px solid #555; border-left: 1px solid #555; padding-left: 13px; font-size: 12.800px; white-space: nowrap; }
.tab { position: relative; line-height: 19px; color: #444; flex: none; }
.tab::after { content: ""; position: absolute; top: 0; bottom: 0; width: 1px; background: #444; }
.t-geo { width: 83px; font-size: 13.500px; font-weight: 700; color: #222; }
.t-geo::before { content: ""; position: absolute; left: -9px; top: 0; bottom: 0; width: 1px; background: #444; transform: skewX(14deg); }
.t-geo::after { right: 11px; transform: skewX(-14deg); }
.t-print { width: 94px; }
.t-print::before { content: ""; position: absolute; left: -6px; top: 0; bottom: 0; width: 1px; background: #444; transform: skewX(-14deg); display: none; }
.t-print::after { right: 10px; transform: skewX(14deg); }
.t-rep { width: 101px; }
.t-rep::before { content: ""; position: absolute; left: -6px; top: 0; bottom: 0; width: 1px; background: #444; transform: skewX(-14deg); }
.t-rep::after { right: 3px; transform: skewX(-14deg); }
.gap { height: 8px; flex: none; background: #f4f6f9; }
.mhead { height: 29px; flex: none; padding-left: 4px; line-height: 27px; font-size: 14px; background: linear-gradient(90deg, #bccfe0, #d6e1ec); border-bottom: 2px solid #85898e; color: #444; }
.mtable { height: 147px; flex: none; background: #a0a0a0; border-left: 1px solid #777; }
.mhdr { display: flex; width: 1300px; height: 25px; background: #eeeeee; border-bottom: 2px solid #8c8c8c; font-size: 14.500px; line-height: 23px; color: #333; }
.mhdr span { display: block; height: 23px; padding-left: 5px; border-right: 1px solid #b0b0b0; flex: none; }
.c0 { width: 63px; }
.c1 { width: 581px; }
.c2 { width: 381px; }
.c3 { width: 275px; }

.status { height: 30px; flex: none; display: flex; align-items: center; background: #efefef; border-top: 2px solid #bbb; font-size: 15.500px; white-space: nowrap; color: #333; }
.status > span { display: flex; align-items: center; height: 28px; flex: none; border-right: 1px solid #ccc; padding-bottom: 3px; }
.st0 { width: 564px; }
.st1 { width: 333px; background: #f3f3f3; }
.st2 { width: 281px; padding-left: 4px; }
.st3 { width: 614px; padding-left: 3px; }
.st4 { flex: 1; padding-left: 4px; }
.st4 span:nth-child(1) { width: 226px; }
.st4 span:nth-child(2) { width: 81px; }
.st4 span:nth-child(3) { width: 58px; }
.msgi { display: inline-block; width: 26px; font-size: 13px; font-weight: 600; text-align: right; padding-right: 2px; background: linear-gradient(135deg, #f0e27a 50%, transparent 50%); }

.taskbar { height: 50px; flex: none; display: flex; background: #1b1b1b; }
.search { width: 362px; flex: none; background: #f0f0f0; border-top: 2px solid #ccc; font-family: "Noto Sans CJK SC", sans-serif; font-size: 19px; line-height: 46px; color: #3a3a3a; white-space: nowrap; overflow: hidden; }
.tk { width: 60px; flex: none; position: relative; display: flex; align-items: center; justify-content: center; }
.cortana { display: block; width: 20px; height: 24px; border: 3.500px solid #eee; border-radius: 50%; }
.tv { width: 22px; height: 30px; }
.ti { width: 30px; height: 46px; transform: scale(.95); }
.ti.s { height: 34px; }
.a1 { width: 65px; }
.a2 { width: 62px; }
.a3 { width: 63px; }
.a4 { width: 61px; background: #a5612d; }
.a5 { width: 62px; background: #505050; }
.run::after, .live::after, .cur::after { content: ""; position: absolute; bottom: 0; height: 3px; background: #76b9ed; left: 10px; right: 0; }
.live::after { background: #f07a1a; left: 0; }
.cur::after { left: 0; }
.tray { margin-left: auto; width: 224px; display: grid; grid-template-columns: 30px 28px 32px 28px 32px 40px 34px; align-items: center; justify-items: center; color: #eee; }
.t1 { width: 18px; height: 12px; }
.t2 { width: 14px; height: 26px; }
.t3 { width: 22px; height: 22px; }
.ime { font-size: 20px; font-family: "Noto Sans CJK SC", sans-serif; }
.pin { width: 19px; height: 19px; background: #fff; color: #111; font-size: 16px; line-height: 19px; text-align: center; font-family: "Noto Sans CJK SC", sans-serif; }
.clock { width: 80px; justify-self: start; margin-left: 12px; font-size: 14.500px; line-height: 24px; white-space: nowrap; color: #eee; }
.time { margin-left: 19px; }
```
